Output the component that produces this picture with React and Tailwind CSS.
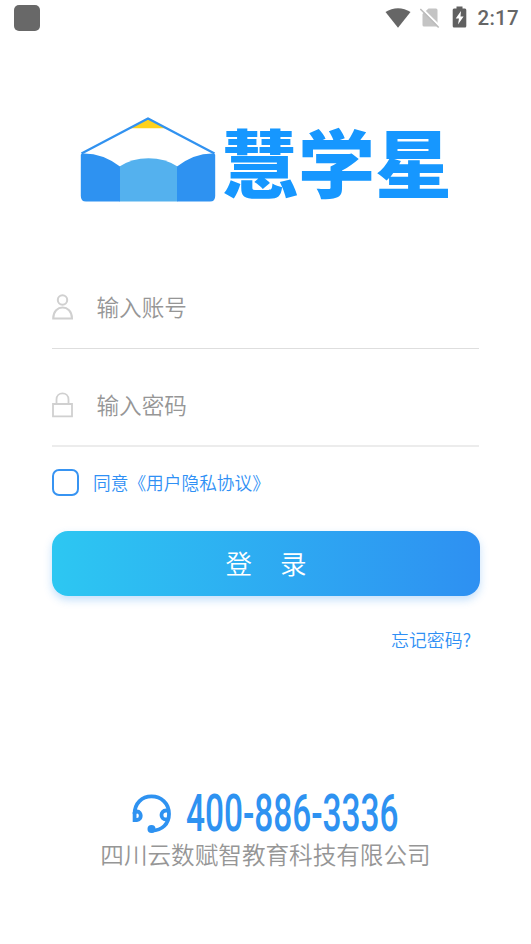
import React from 'react';

const StatusBar = () => (
  <div className="h-9 shrink-0 flex items-center justify-between pl-[14px] pr-3">
    <div className="w-[26px] h-[26px] rounded-[5px] bg-[#686868]" />
    <div className="flex items-center h-full">
      {/* Wifi */}
      <svg className="w-[26px] h-[21px]" viewBox="0 0 26 21" fill="#666">
        <path d="M0.5 4.1C8-1.2 18-1.2 25.5 4.1L13 19.800Z" />
      </svg>
      {/* No sim */}
      <svg className="ml-[9px] w-5 h-[21px]" viewBox="0 0 20 21">
        <path d="M8.500 0.500H16Q17.500 0.500 17.500 2V17.500Q17.500 18.500 16.500 18.500H4Q2.500 18.500 2.500 17V6Z" fill="#c4c4c4" />
        <path d="M1.500 0L20 18.500" stroke="#fff" strokeWidth="2" />
        <path d="M0.300 1L18.700 19.500" stroke="#bcbcbc" strokeWidth="1.600" />
      </svg>
      {/* Battery */}
      <svg className="ml-[12px] w-[15px] h-[22px] -translate-y-px" viewBox="0 0 15 22">
        <path d="M4.500 0.500H10.500V2.500H13Q14.300 2.500 14.300 4V20Q14.300 21.500 13 21.500H2Q0.700 21.500 0.700 20V4Q0.700 2.500 2 2.500H4.500Z" fill="#606060" />
        <path d="M9 5L3.700 12.500H7L6 18.500L11.600 10.500H8.500Z" fill="#fff" />
      </svg>
      <span className="ml-[10px] font-['Roboto',sans-serif] font-medium text-[20.5px] tracking-[0.3px] leading-none text-[#666]">2:17</span>
    </div>
  </div>
);

const Logo = () => (
  <div className="mt-[81px] ml-[80px] flex h-[86px]">
    <svg className="w-[136px] h-[86px] shrink-0" viewBox="0 0 136 86">
      <path d="M68.500 1L50 11.200H86Z" fill="#ffd21c" />
      <path d="M1.500 36.500L68 1.500L134.500 36.500" fill="none" stroke="#3192f0" strokeWidth="2.300" strokeLinejoin="round" />
      <path d="M39.500 49.500Q52 41.200 68.500 41.200Q85 41.200 97.500 49.500V84.500H39.500Z" fill="#54b1ee" />
      <path d="M0.800 38Q0.800 36.500 4 36.500Q23 36.500 40 49.500V84.500H6Q0.800 84.500 0.800 79Z" fill="#2e92f1" />
      <path d="M135.200 38Q135.200 36.500 132 36.500Q114 36.500 97 49.500V84.500H130Q135.200 84.500 135.200 79Z" fill="#2e92f1" />
    </svg>
    <span className="ml-[5px] mt-[3px] origin-center scale-y-[0.96] font-['Noto_Sans_CJK_SC',sans-serif] font-black text-[77px] leading-[80px] whitespace-nowrap text-[#1697ff]">慧学星</span>
  </div>
);

const UserIcon = () => (
  <svg className="w-[22px] h-[26px]" viewBox="0 0 22 26" fill="none" stroke="#d0d0d0" strokeWidth="2">
    <circle cx="10.500" cy="6" r="4.700" />
    <path d="M1.200 24.500C1.200 9.800 20 9.800 20 24.500Z" />
  </svg>
);

const LockIcon = () => (
  <svg className="w-[22px] h-[26px]" viewBox="0 0 22 26" fill="none" stroke="#d0d0d0" strokeWidth="1.800">
    <path d="M1 12H20V24.300H1Z" />
    <path d="M4.500 12V7.500C4.500-0.800 16.500-0.800 16.500 7.500V12" />
  </svg>
);

const Field = ({ icon, label, className }) => (
  <div className={className}>
    {icon}
    <span className="ml-[22.500px] text-[22.6px] leading-[26px] text-[#969696]">{label}</span>
  </div>
);

const App = () => {
  return (
    <div className="w-full h-[944px] overflow-hidden bg-white flex flex-col font-['Noto_Sans_CJK_SC',sans-serif] font-[350]">
      <StatusBar />
      <Logo />

      <div className="ml-[52px] mr-[51px] flex flex-col">
        <Field
          icon={<UserIcon />}
          label="输入账号"
          className="mt-[91px] mr-px h-[55px] flex items-start border-b border-[#dedede]"
        />
        <Field
          icon={<LockIcon />}
          label="输入密码"
          className="mt-[43px] mr-px h-[55px] flex items-start border-b-2 border-[#ececec]"
        />

        {/* Agreement */}
        <div className="mt-[22px] h-[27px] flex items-center">
          <div className="w-[27px] h-[27px] rounded-[7px] border-2 border-[#3794f2]" />
          <span className="ml-[14px] text-[17.7px] leading-[27px] text-[#2f90f5]">同意《用户隐私协议》</span>
        </div>

        <button className="mt-[35px] h-[65px] rounded-[16px] bg-linear-to-r/srgb from-[#2dc7f2] to-[#2e90f2] shadow-[0_4px_9px_rgba(46,144,242,0.28)] flex items-center justify-center gap-[28px] text-[26.5px] leading-none text-white">
          <span>登</span>
          <span>录</span>
        </button>

        <span className="mt-[30px] mr-[9px] self-end text-[17.9px] leading-[26px] text-[#2f90f5]">忘记密码?</span>
      </div>

      {/* Hotline */}
      <div className="mt-[141px] ml-[132px] h-[42px] flex items-center">
        <svg className="w-10 h-10 shrink-0" viewBox="0 0 40 40" fill="none" stroke="#2e92f1" strokeWidth="3.800">
          <path d="M2.600 20C2.600 9 10 2.400 19.500 2.400S37 9 37 20C37 30 30 36.500 20 36.500" />
          <path d="M2.600 18V26H5C10 26 10 17.500 5 17.500H2.600" />
          <path d="M37 16.500H34C28 16.500 28 25.500 34 25.500H36" />
          <circle cx="19.500" cy="35" r="4" fill="#2e92f1" stroke="none" />
        </svg>
        <span className="ml-[14px] origin-left scale-x-[0.655] font-['Roboto',sans-serif] font-medium text-[51px] leading-[42px] whitespace-nowrap text-[#2e92f1]">400-886-3336</span>
      </div>
      <div className="text-center text-[23.6px] leading-[38px] text-[#969696]">四川云数赋智教育科技有限公司</div>
    </div>
  );
};

export default App;
